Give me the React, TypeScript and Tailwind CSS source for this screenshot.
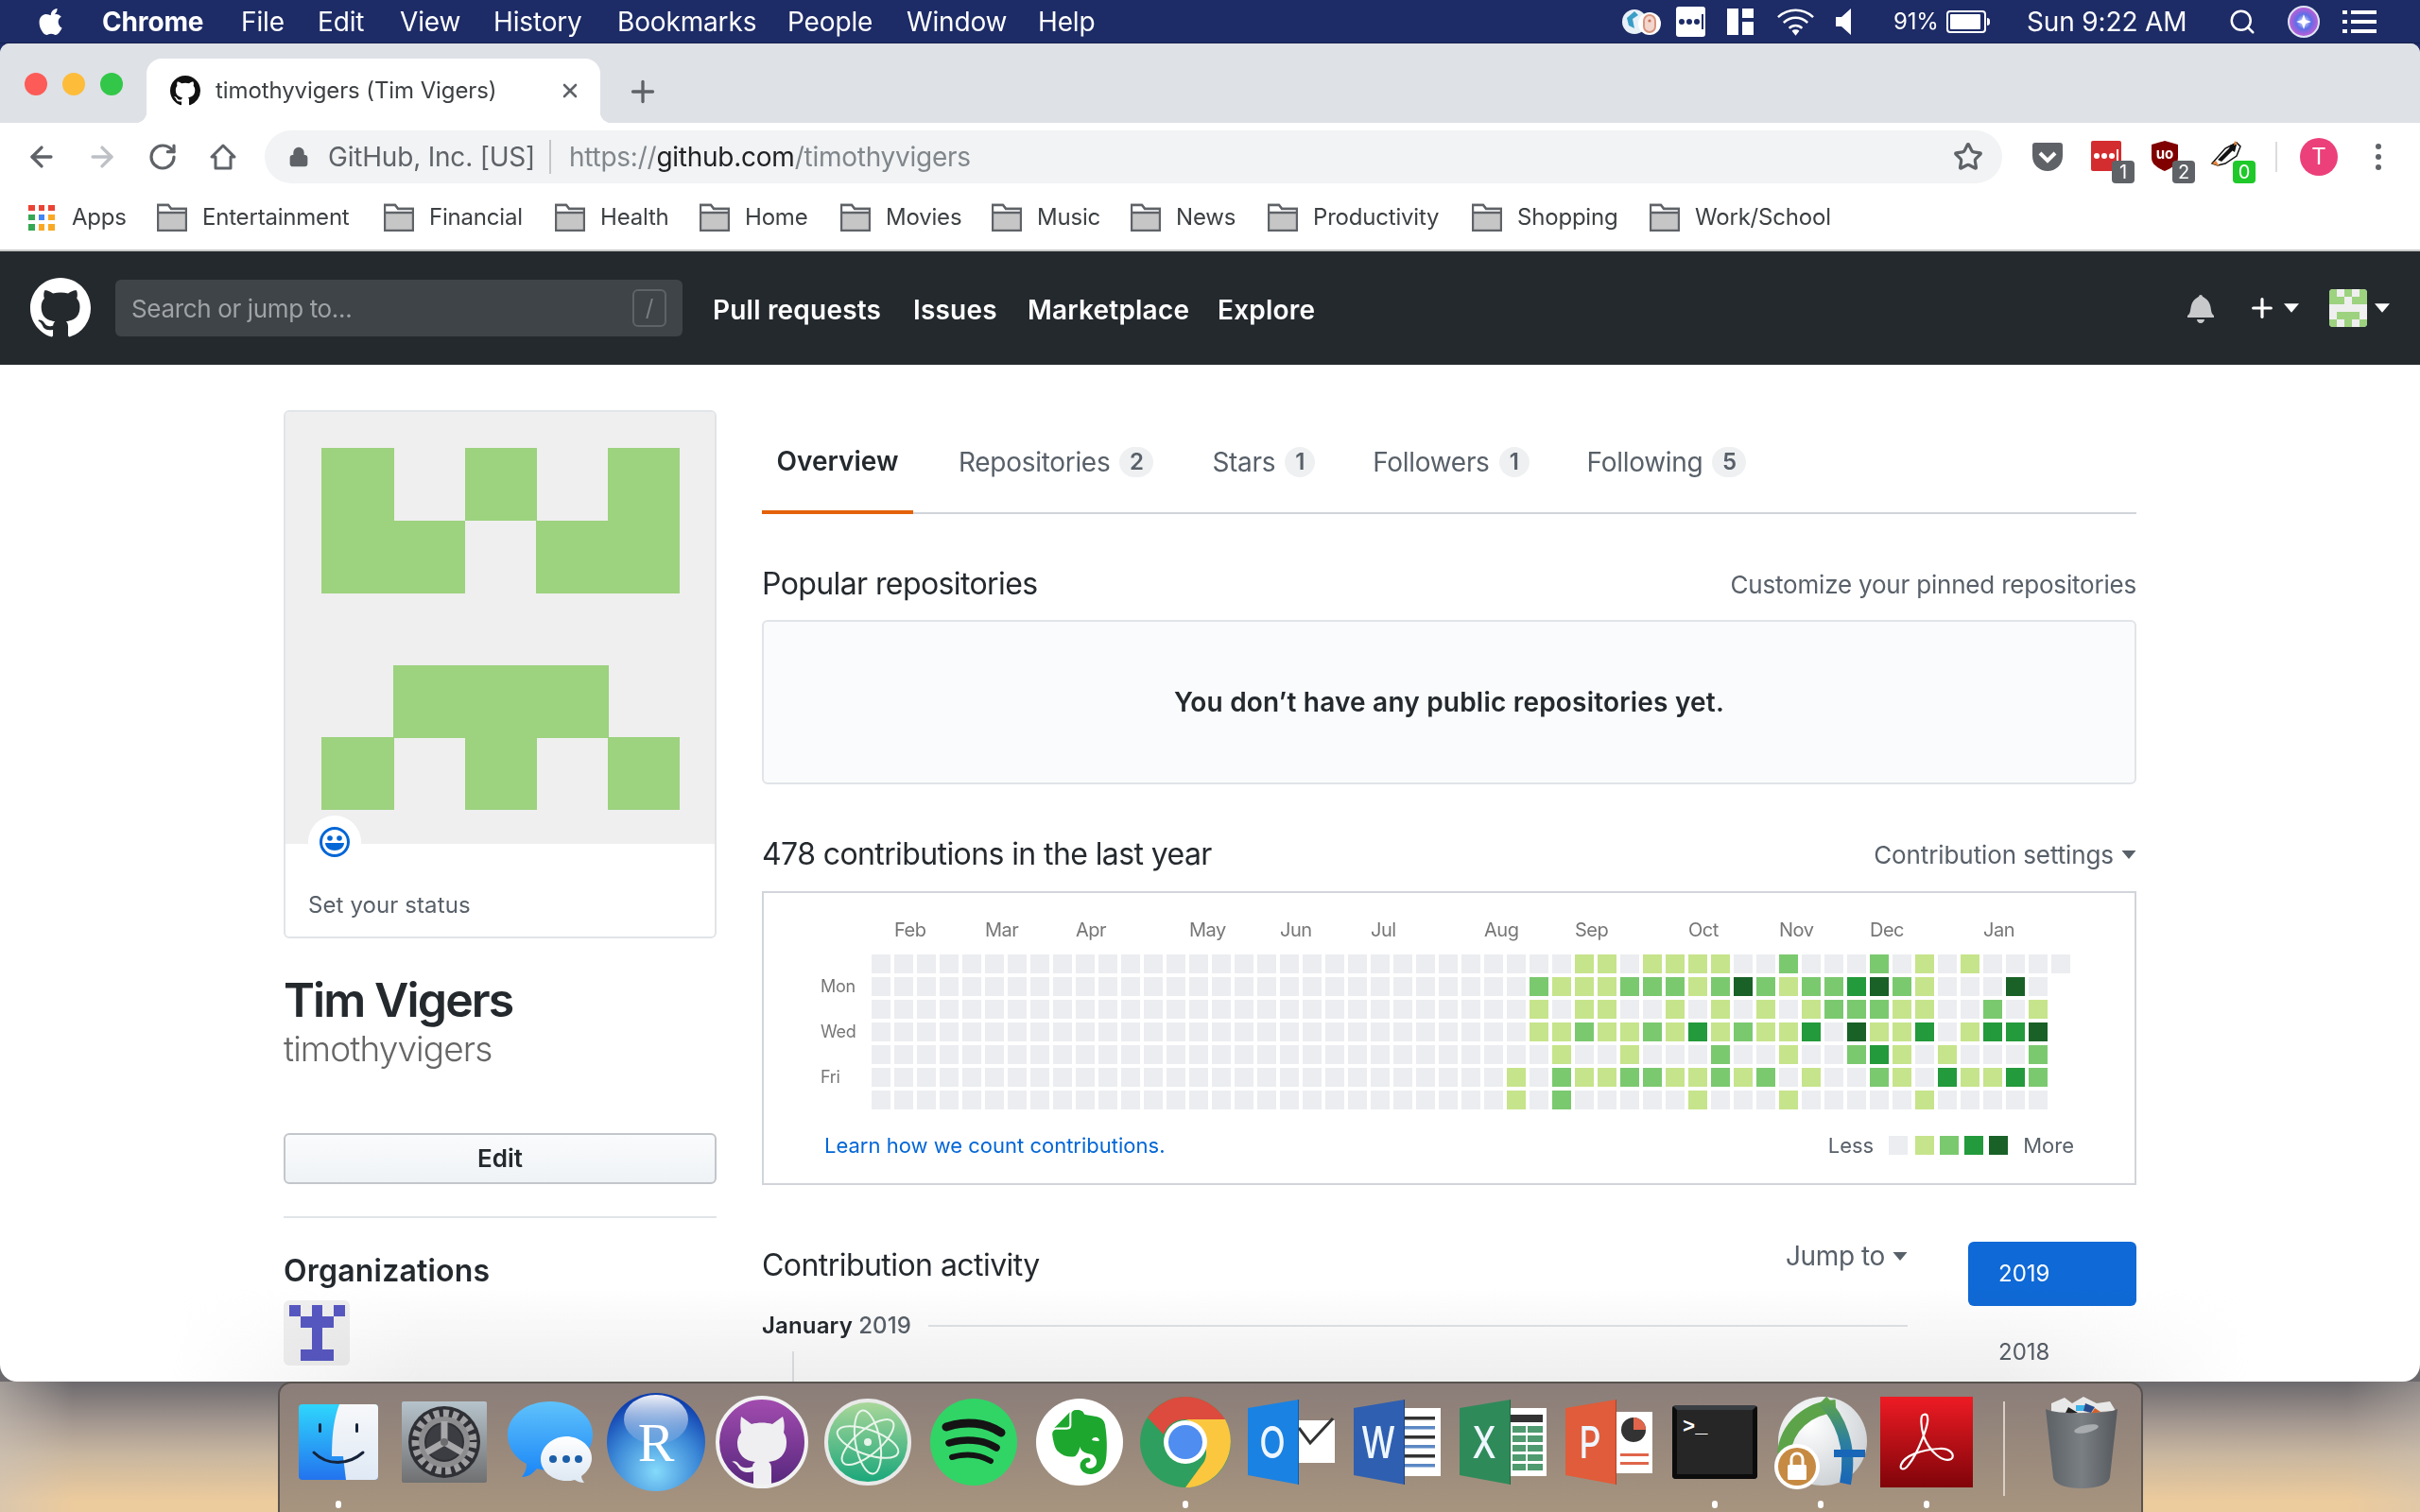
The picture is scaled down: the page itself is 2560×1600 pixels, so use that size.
import React from "react";
import { ArrowLeft, ArrowRight, RotateCw, Star, Lock, Plus, X, Search } from "lucide-react";
import { SiEvernote } from "react-icons/si";

const MARK =
  "M8 0C3.58 0 0 3.58 0 8c0 3.54 2.29 6.53 5.47 7.59.4.07.55-.17.55-.38 0-.19-.01-.82-.01-1.49-2.01.37-2.53-.49-2.69-.94-.09-.23-.48-.94-.82-1.13-.28-.15-.68-.52-.01-.53.63-.01 1.08.58 1.23.82.72 1.21 1.87.87 2.33.66.07-.52.28-.87.51-1.07-1.78-.2-3.64-.89-3.64-3.95 0-.87.31-1.59.82-2.15-.08-.2-.36-1.02.08-2.12 0 0 .67-.21 2.2.82.64-.18 1.32-.27 2-.27.68 0 1.36.09 2 .27 1.53-1.04 2.2-.82 2.2-.82.44 1.1.16 1.92.08 2.12.51.56.82 1.27.82 2.15 0 3.07-1.87 3.75-3.65 3.95.29.25.54.73.54 1.48 0 1.07-.01 1.93-.01 2.2 0 .21.15.46.55.38A8.013 8.013 0 0016 8c0-4.42-3.58-8-8-8z";

function Mark({ className }: { className: string }) {
  return (
    <svg viewBox="0 0 16 16" className={className} fill="currentColor">
      <path d={MARK} />
    </svg>
  );
}

function Caret({ className }: { className: string }) {
  return (
    <svg viewBox="0 0 10 6" className={className} fill="currentColor">
      <path d="M0 0h10L5 6z" />
    </svg>
  );
}

function Folder() {
  return (
    <svg viewBox="0 0 32 30" className="h-[30px] w-[32px] shrink-0">
      <path d="M1 29V2h11l3 4h16v23z" fill="#c6c6c6" stroke="#5f6368" strokeWidth="2.4" />
      <path d="M1 10h30V6H15l-3-4H1z" fill="#fff" stroke="#5f6368" strokeWidth="2.4" />
    </svg>
  );
}

const menuItems: [string, string][] = [
  ["File", "w-[81px]"],
  ["Edit", "w-[87px]"],
  ["View", "w-[99px]"],
  ["History", "w-[131px]"],
  ["Bookmarks", "w-[180px]"],
  ["People", "w-[126px]"],
  ["Window", "w-[139px]"],
  ["Help", "w-[80px]"],
];

function MenuBar() {
  return (
    <div className="flex h-[46px] shrink-0 items-center border-b border-[#14204f] bg-[#1d2b66] text-[28px] leading-none tracking-[-0.15px] text-white">
      <svg viewBox="-1 0 24 28" className="ml-[41px] mr-[41px] h-[32px] w-[26px]" fill="#fff">
        <path d="M17 1c.2 2-.6 3.8-1.7 5-1.200 1.300-2.900 2.200-4.500 2-.2-1.800.7-3.700 1.700-4.800C13.600 1.900 15.500 1 17 1zM21.700 20c-.6 1.300-.9 1.900-1.700 3.100-1.100 1.700-2.600 3.800-4.500 3.800-1.700 0-2.100-1.100-4.400-1.100-2.300 0-2.800 1.100-4.400 1.100-1.900 0-3.400-1.900-4.500-3.600C-.9 18.400-1.200 12.800.7 9.900 2 7.800 4.100 6.600 6.100 6.600c2 0 3.300 1.100 5 1.100 1.600 0 2.600-1.100 4.900-1.100 1.800 0 3.700 1 5 2.600-4.400 2.400-3.700 8.700.7 10.800z" />
      </svg>
      <span className="w-[147px] font-bold">Chrome</span>
      {menuItems.map(([t, w]) => (
        <span key={t} className={w}>
          {t}
        </span>
      ))}
      <div className="ml-auto flex items-center">
        <svg viewBox="0 0 44 32" className="mr-[14px] h-[32px] w-[44px]">
          <circle cx="14" cy="16" r="13" fill="#e8f1f8" />
          <path d="M6 12l8-7 4 4-6 4 2 10-6-3z" fill="#3a9ec7" />
          <circle cx="30" cy="18" r="12" fill="#fff" />
          <rect x="24" y="9" width="12" height="18" rx="6" fill="#f3d6cd" stroke="#d9957f" strokeWidth="2" />
          <circle cx="30" cy="15" r="1.600" fill="#c8705a" />
        </svg>
        <div className="mr-[23px] flex h-[32px] w-[31px] items-center justify-center gap-[2px] rounded-[3px] bg-white">
          <span className="h-[6px] w-[6px] rounded-full bg-[#1d2b66]" />
          <span className="h-[6px] w-[6px] rounded-full bg-[#1d2b66]" />
          <span className="h-[6px] w-[6px] rounded-full bg-[#1d2b66]" />
          <span className="h-[16px] w-[2px] bg-[#1d2b66]" />
        </div>
        <div className="mr-[24px] grid h-[28px] w-[28px] grid-cols-[12px_12px] grid-rows-[10px_14px] gap-[4px]">
          <span className="row-span-2 bg-white" />
          <span className="bg-white" />
          <span className="bg-white" />
        </div>
        <svg viewBox="0 0 42 30" className="mr-[22px] h-[30px] w-[41px]" fill="none" stroke="#fff" strokeWidth="2.600">
          <path d="M2 10C13 0 29 0 40 10" />
          <path d="M8 16c8-7 18-7 26 0" />
          <path d="M14 22c4-4 10-4 14 0" />
          <path d="M21 30l-4-5c2-2 6-2 8 0z" fill="#fff" stroke="none" />
        </svg>
        <svg viewBox="0 0 16 28" className="mr-[45px] h-[28px] w-[16px]" fill="#fff">
          <path d="M0 9h6l10-9v28L6 19H0z" />
        </svg>
        <span className="w-[56px] text-[24px]">91%</span>
        <div className="ml-[0px] mr-[39px] flex items-center">
          <div className="flex h-[24px] w-[42px] items-center rounded-[4px] border-2 border-white p-[2px]">
            <span className="h-full w-[32px] rounded-[1px] bg-white" />
          </div>
          <span className="ml-[1px] h-[8px] w-[3px] rounded-r-full bg-white" />
        </div>
        <span className="w-[167px] whitespace-nowrap">Sun 9:22 AM</span>
        <Search className="ml-[46px] text-white" size={30} strokeWidth={2} />
        <svg viewBox="0 0 34 34" className="ml-[33px] h-[34px] w-[34px]">
          <defs>
            <radialGradient id="siri" cx="50%" cy="50%" r="60%">
              <stop offset="0" stopColor="#e7eaff" />
              <stop offset="0.4" stopColor="#5b6ee8" />
              <stop offset="0.75" stopColor="#b45fd8" />
              <stop offset="1" stopColor="#3fb8e8" />
            </radialGradient>
          </defs>
          <circle cx="17" cy="17" r="16" fill="url(#siri)" stroke="#dfe5f5" strokeWidth="2" />
          <path d="M17 9l2 6 6 2-6 2-2 6-2-6-6-2 6-2z" fill="#fff" />
        </svg>
        <div className="ml-[24px] mr-[46px] flex w-[36px] flex-col gap-[6px]">
          {[0, 1, 2].map((i) => (
            <div key={i} className="flex h-[4px] gap-[4px]">
              <span className="w-[5px] bg-white" />
              <span className="flex-1 bg-white" />
            </div>
          ))}
        </div>
      </div>
    </div>
  );
}

function TabStrip() {
  return (
    <div className="flex h-[84px] shrink-0 items-end bg-[#dee1e6]">
      <div className="mb-[29px] flex w-[155px] gap-[16px] pl-[26px]">
        <span className="h-[24px] w-[24px] rounded-full bg-[#fc5b57]" />
        <span className="h-[24px] w-[24px] rounded-full bg-[#fdbc3a]" />
        <span className="h-[24px] w-[24px] rounded-full bg-[#32c748]" />
      </div>
      <div className="relative flex h-[68px] w-[480px] items-center rounded-t-[16px] bg-white pl-[25px] text-[24px] text-[#3c4043]">
        <span className="absolute -left-[12px] bottom-0 h-[12px] w-[12px] bg-[radial-gradient(circle_at_0_0,transparent_12px,#ffffff_12.500px)]" />
        <span className="absolute -right-[12px] bottom-0 h-[12px] w-[12px] bg-[radial-gradient(circle_at_100%_0,transparent_12px,#ffffff_12.500px)]" />
        <Mark className="h-[32px] w-[32px] shrink-0 text-[#111]" />
        <span className="ml-[16px] whitespace-nowrap tracking-[-0.1px]">timothyvigers (Tim Vigers)</span>
        <X className="absolute right-[20px] text-[#5f6368]" size={24} strokeWidth={2.6} />
      </div>
      <Plus className="mb-[15px] ml-[27px] text-[#5f6368]" size={36} strokeWidth={2.2} />
    </div>
  );
}

function Ext({ badge, badgeClass, children }: { badge?: string; badgeClass?: string; children: React.ReactNode }) {
  return (
    <div className="relative flex h-[64px] w-[64px] items-center justify-center">
      {children}
      {badge && (
        <span
          className={`absolute left-[36px] top-[36px] flex h-[24px] w-[24px] items-center justify-center rounded-[4px] text-[20px] leading-none text-white ${badgeClass}`}
        >
          {badge}
        </span>
      )}
    </div>
  );
}

function Toolbar() {
  return (
    <div className="flex h-[72px] shrink-0 items-center bg-white pl-[12px]">
      <div className="flex h-[64px] w-[64px] items-center justify-center">
        <ArrowLeft className="text-[#5f6368]" size={34} strokeWidth={2.4} />
      </div>
      <div className="flex h-[64px] w-[64px] items-center justify-center">
        <ArrowRight className="text-[#bdc1c6]" size={34} strokeWidth={2.4} />
      </div>
      <div className="flex h-[64px] w-[64px] items-center justify-center">
        <RotateCw className="text-[#5f6368]" size={32} strokeWidth={2.4} />
      </div>
      <div className="flex h-[64px] w-[64px] items-center justify-center">
        <svg viewBox="0 0 28 30" className="h-[30px] w-[28px]" fill="none" stroke="#5f6368" strokeWidth="3">
          <path d="M14 3L2 15h4v12h16V15h4z" strokeLinejoin="round" />
        </svg>
      </div>
      <div className="ml-[12px] flex h-[56px] w-[1838px] items-center rounded-full bg-[#f1f3f4] pl-[25px] text-[28px] leading-none text-[#5f6368]">
        <Lock className="text-[#5f6368]" fill="#5f6368" size={22} strokeWidth={2.4} />
        <span className="ml-[20px] w-[218px] whitespace-nowrap tracking-[-0.2px]">GitHub, Inc. [US]</span>
        <span className="ml-[16px] h-[36px] w-[2px] bg-[#c4c7c9]" />
        <span className="ml-[19px] whitespace-nowrap tracking-[-0.25px] text-[#80868b]">
          https://<span className="text-[#202124]">github.com</span>/timothyvigers
        </span>
        <Star className="ml-auto mr-[20px] text-[#5f6368]" size={32} strokeWidth={2.4} />
      </div>
      <div className="ml-[16px] flex items-center">
        <Ext>
          <svg viewBox="0 0 32 30" className="h-[30px] w-[32px]">
            <path d="M0 3q0-3 3-3h26q3 0 3 3v11c0 10-8 16-16 16S0 24 0 14z" fill="#5f6368" />
            <path d="M8 11l8 8 8-8" fill="none" stroke="#fff" strokeWidth="4" />
          </svg>
        </Ext>
        <Ext badge="1" badgeClass="bg-[#5f6368]">
          <div className="-ml-[4px] -mt-[2px] flex h-[32px] w-[32px] items-center justify-center gap-[2px] rounded-[2px] bg-[#d32d2f]">
            <span className="h-[6px] w-[6px] rounded-full bg-white" />
            <span className="h-[6px] w-[6px] rounded-full bg-white" />
            <span className="h-[6px] w-[6px] rounded-full bg-white" />
            <span className="h-[14px] w-[2px] bg-white" />
          </div>
        </Ext>
        <Ext badge="2" badgeClass="bg-[#5f6368]">
          <svg viewBox="0 0 28 32" className="-ml-[8px] -mt-[2px] h-[32px] w-[28px]">
            <path d="M14 0l14 4v14c0 7-7 11-14 14C7 29 0 25 0 18V4z" fill="#800000" />
            <text x="14" y="19" textAnchor="middle" fontFamily="Inter" fontSize="15" fontWeight="700" fill="#fff">
              uo
            </text>
          </svg>
        </Ext>
        <Ext badge="0" badgeClass="bg-[#1fc92a]">
          <svg viewBox="0 0 34 28" className="-ml-[6px] -mt-[6px] h-[28px] w-[34px]">
            <path d="M2 24L16 8l12-6 4 4-4 10-12 8-8 2z" fill="#fff" stroke="#111" strokeWidth="1.500" />
            <path d="M8 20L20 8l4 2-12 12zM22 4l6 0-2 8-6-4z" fill="#111" />
            <path d="M26 0l3 3-4 2zM2 24l8 3-4-6z" fill="#e8843a" />
          </svg>
        </Ext>
      </div>
      <span className="ml-[17px] h-[32px] w-[2px] bg-[#dadce0]" />
      <span className="ml-[24px] flex h-[40px] w-[40px] items-center justify-center rounded-full bg-[#ec407a] text-[24px] text-white">
        T
      </span>
      <div className="ml-[40px] flex flex-col gap-[5px]">
        <span className="h-[6px] w-[6px] rounded-full bg-[#5f6368]" />
        <span className="h-[6px] w-[6px] rounded-full bg-[#5f6368]" />
        <span className="h-[6px] w-[6px] rounded-full bg-[#5f6368]" />
      </div>
    </div>
  );
}

const bookmarks: [string, string][] = [
  ["Entertainment", "w-[240px]"],
  ["Financial", "w-[181px]"],
  ["Health", "w-[153px]"],
  ["Home", "w-[149px]"],
  ["Movies", "w-[160px]"],
  ["Music", "w-[147px]"],
  ["News", "w-[145px]"],
  ["Productivity", "w-[216px]"],
  ["Shopping", "w-[188px]"],
  ["Work/School", "w-[200px]"],
];

function BookmarksBar() {
  return (
    <div className="flex h-[64px] shrink-0 items-center border-b-2 border-[#c8c8c8] bg-white pb-[6px] pl-[30px] text-[24px] leading-none tracking-[-0.2px] text-[#3c4043]">
      <div className="grid h-[27px] w-[28px] grid-cols-3 grid-rows-3 gap-[4px]">
        {["#ea4335", "#ea4335", "#ea4335", "#34a853", "#4285f4", "#f9a825", "#34a853", "#f9a825", "#f9a825"].map((c, i) => (
          <span key={i} style={{ background: c }} />
        ))}
      </div>
      <span className="ml-[18px] w-[90px]">Apps</span>
      {bookmarks.map(([t, w]) => (
        <div key={t} className={`flex items-center gap-[16px] ${w}`}>
          <Folder />
          <span className="whitespace-nowrap">{t}</span>
        </div>
      ))}
    </div>
  );
}

function GitHubHeader() {
  return (
    <div className="flex h-[120px] shrink-0 items-center bg-[#24292e] pl-[32px] text-white">
      <Mark className="h-[64px] w-[64px] text-white" />
      <div className="ml-[26px] flex h-[60px] w-[600px] items-center justify-between rounded-[6px] bg-[#3f4448] pl-[17px] pr-[17px] text-[26px] text-[#9fa3a6]">
        <span className="tracking-[-0.35px]">Search or jump to...</span>
        <span className="flex h-[40px] w-[36px] items-center justify-center rounded-[6px] border-2 border-[#5e6367] text-[24px] text-[#7b7f83]">
          /
        </span>
      </div>
      <div className="ml-[32px] flex pt-[3px] text-[28px] font-semibold leading-none tracking-[0.2px]">
        <span className="w-[212px]">Pull requests</span>
        <span className="w-[121px]">Issues</span>
        <span className="w-[201px]">Marketplace</span>
        <span>Explore</span>
      </div>
      <div className="ml-auto flex items-center">
        <svg viewBox="0 0 14 16" className="h-[32px] w-[28px]" fill="#c8c9cb">
          <path d="M14 12v1H0v-1l.73-.58c.77-.77.81-2.55 1.19-4.42C2.690 3.230 6 2 6 2c0-.55.45-1 1-1s1 .45 1 1c0 0 3.390 1.230 4.160 5 .38 1.880.42 3.660 1.190 4.420l.66.58H14zm-7 4c1.110 0 2-.89 2-2H5c0 1.110.89 2 2 2z" />
        </svg>
        <Plus className="ml-[35px] text-white" size={32} strokeWidth={2.4} />
        <Caret className="ml-[7px] h-[10px] w-[16px] text-white" />
        <svg viewBox="0 0 5 5" className="ml-[32px] h-[40px] w-[40px] rounded-[4px] bg-[#efefef]" shapeRendering="crispEdges">
          <Identicon />
        </svg>
        <Caret className="ml-[8px] mr-[32px] h-[10px] w-[16px] text-white" />
      </div>
    </div>
  );
}

function Identicon() {
  const on = [
    [0, 0], [2, 0], [4, 0],
    [0, 1], [1, 1], [3, 1], [4, 1],
    [1, 3], [2, 3], [3, 3],
    [0, 4], [2, 4], [4, 4],
  ];
  return (
    <g fill="#9dd27f">
      {on.map(([x, y]) => (
        <rect key={`${x}-${y}`} x={x} y={y} width="1.010" height="1.010" />
      ))}
    </g>
  );
}

function Sidebar() {
  return (
    <div className="w-[458px] shrink-0">
      <div className="relative overflow-hidden rounded-[6px] border-2 border-[#e1e4e8]">
        <div className="bg-[#efefef] pb-[36px] pl-[38px] pt-[38px]">
          <svg viewBox="0 0 5 5" preserveAspectRatio="none" className="block h-[383px] w-[379px]" shapeRendering="crispEdges">
            <Identicon />
          </svg>
        </div>
        <div className="absolute left-[24px] top-[427px] flex h-[56px] w-[56px] items-center justify-center rounded-full bg-white">
          <svg viewBox="0 0 32 32" className="h-[32px] w-[32px]">
            <circle cx="16" cy="16" r="14.500" fill="none" stroke="#0366d6" strokeWidth="3" />
            <circle cx="11" cy="12" r="2.800" fill="#0366d6" />
            <circle cx="21" cy="12" r="2.800" fill="#0366d6" />
            <path d="M6 17h20c0 5-5 8-10 8S6 22 6 17z" fill="#0366d6" />
          </svg>
        </div>
        <div className="h-[98px] pl-[24px] pt-[49px] text-[24px] leading-[32px] tracking-[0.1px] text-[#586069]">Set your status</div>
      </div>
      <h1 className="mt-[35px] h-[60px] text-[50px] font-semibold leading-[60px] tracking-[-1.900px] text-[#24292e]">Tim Vigers</h1>
      <div className="-mt-[2px] h-[48px] text-[37px] font-light leading-[48px] tracking-[-0.900px] text-[#666666]">timothyvigers</div>
      <div className="mt-[65px] flex h-[54px] items-center justify-center rounded-[6px] border-2 border-[#c3c6ca] bg-[linear-gradient(180deg,#fafbfc,#eff3f6)] text-[26px] font-semibold leading-none text-[#24292e]">
        Edit
      </div>
      <div className="mt-[34px] h-[2px] bg-[#e1e4e8]" />
      <h2 className="mt-[36px] h-[40px] text-[32px] font-semibold leading-[40px] tracking-[0.2px] text-[#24292e]">Organizations</h2>
      <div className="mt-[11px] flex h-[69px] w-[70px] items-center justify-center rounded-[6px] bg-[#efefef]">
        <svg viewBox="0 0 5 5" className="h-[59px] w-[59px]" fill="#5757c2" shapeRendering="crispEdges">
          <rect x="0" y="0" width="1" height="1" />
          <rect x="2" y="0" width="1" height="1" />
          <rect x="4" y="0" width="1" height="1" />
          <rect x="1" y="1" width="3" height="1" />
          <rect x="2" y="2" width="1" height="2" />
          <rect x="1" y="4" width="3" height="1" />
        </svg>
      </div>
    </div>
  );
}

function Counter({ n }: { n: number }) {
  return (
    <span
      className={`ml-[10px] flex h-[32px] items-center justify-center rounded-full bg-[#eef0f1] text-[24px] font-semibold leading-none text-[#586069] ${
        n === 1 ? "w-[32px]" : "w-[36px]"
      }`}
    >
      {n}
    </span>
  );
}

function ProfileTabs() {
  return (
    <div className="flex h-[110px] items-start border-b-2 border-[#d1d5da] text-[28px] leading-none tracking-[-0.3px] text-[#586069]">
      <div className="flex h-[110px] w-[160px] items-center justify-center border-b-4 border-[#e36209] pt-[2px] font-semibold tracking-normal text-[#24292e]">Overview</div>
      <div className="ml-[48px] flex h-[108px] items-center pt-[2px]">
        Repositories
        <Counter n={2} />
      </div>
      <div className="ml-[62px] flex h-[108px] items-center pt-[2px]">
        Stars
        <Counter n={1} />
      </div>
      <div className="ml-[61px] flex h-[108px] items-center pt-[2px]">
        Followers
        <Counter n={1} />
      </div>
      <div className="ml-[61px] flex h-[108px] items-center pt-[2px]">
        Following
        <Counter n={5} />
      </div>
    </div>
  );
}

const LEVEL = ["bg-[#ebedf0]", "bg-[#c6e48b]", "bg-[#7bc96f]", "bg-[#239a3b]", "bg-[#196127]"];

const activity: Record<number, number>[] = [
  { 31: 1, 32: 1, 34: 1, 35: 1, 36: 1, 37: 1, 40: 2, 44: 2, 46: 1, 48: 1 },
  { 29: 2, 30: 1, 31: 1, 32: 1, 33: 2, 34: 2, 35: 2, 36: 1, 37: 2, 38: 4, 39: 2, 40: 1, 41: 2, 42: 2, 43: 3, 44: 4, 45: 2, 46: 1, 50: 4 },
  { 29: 1, 31: 1, 32: 1, 35: 1, 37: 1, 39: 1, 41: 1, 42: 2, 43: 2, 44: 2, 45: 1, 46: 1, 49: 2, 51: 1 },
  { 29: 1, 30: 1, 31: 2, 32: 1, 33: 1, 34: 2, 35: 1, 36: 3, 37: 1, 38: 2, 39: 1, 40: 1, 41: 3, 43: 4, 44: 1, 45: 1, 46: 3, 48: 1, 49: 3, 50: 3, 51: 4 },
  { 30: 1, 33: 1, 37: 2, 40: 1, 43: 2, 44: 3, 45: 1, 47: 1, 51: 2 },
  { 28: 1, 30: 2, 31: 1, 32: 1, 33: 2, 34: 2, 35: 1, 36: 1, 37: 2, 38: 1, 39: 2, 41: 1, 44: 2, 45: 1, 47: 3, 48: 1, 49: 1, 50: 3, 51: 2 },
  { 28: 1, 30: 2, 36: 1, 40: 1, 46: 1 },
];

const months: [string, number][] = [
  ["Feb", 1], ["Mar", 5], ["Apr", 9], ["May", 14], ["Jun", 18], ["Jul", 22],
  ["Aug", 27], ["Sep", 31], ["Oct", 36], ["Nov", 40], ["Dec", 44], ["Jan", 49],
];

function Graph() {
  return (
    <div className="mt-[19px] h-[311px] border-2 border-[#d1d5da] pt-[24px]">
      <div className="ml-[114px] grid h-[30px] grid-cols-[repeat(53,20px)] gap-x-[4px] text-[20px] leading-[30px] tracking-[-0.5px] text-[#767676]">
        {months.map(([m, c]) => (
          <span key={m} className="whitespace-nowrap" style={{ gridColumnStart: c + 1 }}>
            {m}
          </span>
        ))}
      </div>
      <div className="mt-[11px] flex">
        <div className="ml-[60px] grid w-[54px] grid-rows-[repeat(7,20px)] gap-y-[4px] text-[18px] leading-[20px] tracking-[-0.3px] text-[#767676]">
          <span className="row-start-2">Mon</span>
          <span className="row-start-4">Wed</span>
          <span className="row-start-6">Fri</span>
        </div>
        <div className="grid grid-cols-[repeat(53,20px)] grid-rows-[repeat(7,20px)] gap-[4px]">
          {activity.map((row, r) =>
            Array.from({ length: 53 }).map((_, c) =>
              c === 52 && r > 0 ? <span key={`${r}-${c}`} /> : <span key={`${r}-${c}`} className={LEVEL[row[c] ?? 0]} />
            )
          )}
        </div>
      </div>
      <div className="mt-[22px] flex h-[32px] items-center pl-[64px] pr-[64px] text-[22px] leading-none">
        <span className="text-[#0366d6]">Learn how we count contributions.</span>
        <span className="ml-auto text-[#586069]">Less</span>
        <span className="ml-[16px] h-[20px] w-[20px] bg-[#ebedf0]" />
        <span className="ml-[8px] h-[20px] w-[20px] bg-[#c6e48b]" />
        <span className="ml-[6px] h-[20px] w-[20px] bg-[#7bc96f]" />
        <span className="ml-[6px] h-[20px] w-[20px] bg-[#239a3b]" />
        <span className="ml-[6px] h-[20px] w-[20px] bg-[#196127]" />
        <span className="ml-[16px] text-[#586069]">More</span>
      </div>
    </div>
  );
}

function MainColumn() {
  return (
    <div className="ml-[48px] w-[1454px] shrink-0">
      <ProfileTabs />
      <div className="mt-[54px] flex h-[40px] items-center justify-between">
        <h2 className="text-[32px] leading-none tracking-[-0.6px] text-[#24292e]">Popular repositories</h2>
        <span className="pt-[1px] text-[26px] leading-none tracking-[-0.2px] text-[#586069]">Customize your pinned repositories</span>
      </div>
      <div className="mt-[18px] flex h-[174px] items-center justify-center rounded-[6px] border-2 border-[#e1e4e8] bg-[#fafbfc] text-[28px] font-semibold leading-none tracking-[0.2px] text-[#24292e]">
        You don’t have any public repositories yet.
      </div>
      <div className="mt-[54px] flex h-[40px] items-center justify-between">
        <h2 className="text-[32px] leading-none tracking-[-0.6px] text-[#24292e]">478 contributions in the last year</h2>
        <span className="flex items-center pt-[1px] text-[26px] leading-none tracking-[-0.1px] text-[#586069]">
          Contribution settings
          <Caret className="ml-[8px] h-[9px] w-[16px]" />
        </span>
      </div>
      <Graph />
      <div className="mt-[60px] flex">
        <div className="w-[1212px] pt-[5px]">
          <div className="flex items-start justify-between">
            <h2 className="h-[40px] text-[32px] leading-[40px] tracking-[-0.55px] text-[#24292e]">Contribution activity</h2>
            <span className="-mt-[10px] flex h-[40px] items-center text-[28px] leading-none tracking-[-0.4px] text-[#586069]">
              Jump to
              <Caret className="ml-[8px] h-[9px] w-[16px]" />
            </span>
          </div>
          <div className="mt-[24px] flex h-[40px] items-center text-[24px] leading-none tracking-[0.15px]">
            <span className="whitespace-nowrap font-semibold text-[#24292e]">
              January <span className="font-medium text-[#586069]">2019</span>
            </span>
            <span className="ml-[18px] h-[2px] flex-1 bg-[#e1e4e8]" />
          </div>
          <div className="ml-[32px] mt-[7px] h-[40px] w-[2px] bg-[#e1e4e8]" />
        </div>
        <div className="ml-[64px] w-[178px] text-[24px] leading-none">
          <div className="flex h-[68px] items-center rounded-[6px] bg-[#0f69d6] pl-[32px] text-white">2019</div>
          <div className="mt-[15px] flex h-[68px] items-center pl-[32px] text-[#586069]">2018</div>
        </div>
      </div>
    </div>
  );
}

function Ic({ w, h, vb, children }: { w: string; h: string; vb: string; children: React.ReactNode }) {
  return (
    <svg viewBox={vb} className={`${w} ${h}`}>
      {children}
    </svg>
  );
}

function OfficeIcon({ color, dark, letter, children, docY = 9, docH = 72 }: { color: string; dark: string; letter: string; children: React.ReactNode; docY?: number; docH?: number }) {
  return (
    <svg viewBox="0 0 92 90" className="h-[90px] w-[92px]">
      <rect x="52" y={docY} width="40" height={docH} fill="#fff" />
      {children}
      <path d="M0 9L54 0v90L0 80z" fill={color} />
      <path d="M53 0h1v90h-1z" fill={dark} />
      <text transform="translate(26 62) scale(0.78 1)" textAnchor="middle" fontFamily="Inter" fontSize="46" fontWeight="500" fill="#eef6ff">
        {letter}
      </text>
    </svg>
  );
}

const dockIcons: { key: string; dot?: boolean; el: React.ReactNode }[] = [
  {
    key: "finder",
    dot: true,
    el: (
      <Ic w="w-[84px]" h="h-[80px]" vb="0 0 84 80">
        <defs>
          <linearGradient id="fb" x1="0" y1="0" x2="0" y2="1">
            <stop offset="0" stopColor="#2fd6fd" />
            <stop offset="1" stopColor="#2373ee" />
          </linearGradient>
          <linearGradient id="fw" x1="0" y1="0" x2="0" y2="1">
            <stop offset="0" stopColor="#f7f8fa" />
            <stop offset="1" stopColor="#dfe9f5" />
          </linearGradient>
        </defs>
        <rect width="84" height="80" rx="4" fill="url(#fb)" />
        <path d="M43 0h37q4 0 4 4v72q0 4-4 4H50q-2-16-3-25h-12c0-20 2-40 8-55z" fill="url(#fw)" />
        <rect x="21" y="20" width="3" height="10" rx="1.500" fill="#15233a" />
        <rect x="60" y="20" width="3" height="10" rx="1.500" fill="#15233a" />
        <path d="M16 51c14 14 36 14 52 0" fill="none" stroke="#15233a" strokeWidth="3" strokeLinecap="round" />
      </Ic>
    ),
  },
  {
    key: "settings",
    el: (
      <Ic w="w-[90px]" h="h-[86px]" vb="0 0 90 86">
        <defs>
          <linearGradient id="sg" x1="0" y1="0" x2="0" y2="1">
            <stop offset="0" stopColor="#b6c3cb" />
            <stop offset="1" stopColor="#6f7071" />
          </linearGradient>
        </defs>
        <rect width="90" height="86" rx="2" fill="url(#sg)" />
        <circle cx="45" cy="43" r="38" fill="#2f3035" />
        <circle cx="45" cy="43" r="30" fill="none" stroke="#a0a0a2" strokeWidth="9" strokeDasharray="6 4" />
        <circle cx="45" cy="43" r="24" fill="none" stroke="#8c8c8e" strokeWidth="6" />
        <circle cx="45" cy="43" r="19" fill="#3c3d42" />
        <path d="M45 43V21M45 43L26 54M45 43l19 11" stroke="#a8a8aa" strokeWidth="7" />
        <circle cx="45" cy="43" r="4" fill="#6c6c6e" />
      </Ic>
    ),
  },
  {
    key: "messages",
    el: (
      <Ic w="w-[90px]" h="h-[86px]" vb="0 0 90 86">
        <defs>
          <linearGradient id="mg" x1="0" y1="0" x2="0" y2="1">
            <stop offset="0" stopColor="#5fc2fb" />
            <stop offset="1" stopColor="#1a86f7" />
          </linearGradient>
          <linearGradient id="mw" x1="0" y1="0" x2="0" y2="1">
            <stop offset="0" stopColor="#fff" />
            <stop offset="1" stopColor="#dde8f3" />
          </linearGradient>
        </defs>
        <path d="M45 0c25 0 45 15 45 35s-20 38-45 38c-5 0-10-1-14-2-4 5-9 9-16 9 3-4 5-8 5-14C8 60 0 49 0 35 0 15 20 0 45 0z" fill="url(#mg)" />
        <path d="M62 37c14 0 27 10 27 23 0 8-5 15-11 19 0 2 1 4 3 7-4 0-7-1-10-3-3 1-6 1-9 1-14 0-27-10-27-23s13-24 27-24z" fill="url(#mw)" />
        <circle cx="48" cy="61" r="4" fill="#1c5fa8" />
        <circle cx="62" cy="61" r="4" fill="#1c5fa8" />
        <circle cx="75" cy="61" r="4" fill="#1c5fa8" />
      </Ic>
    ),
  },
  {
    key: "r",
    el: (
      <Ic w="w-[104px]" h="h-[104px]" vb="0 0 104 104">
        <defs>
          <radialGradient id="rg" cx="50%" cy="80%" r="75%">
            <stop offset="0" stopColor="#84dafb" />
            <stop offset="0.6" stopColor="#3a86d6" />
            <stop offset="1" stopColor="#0f3fae" />
          </radialGradient>
          <linearGradient id="rh" x1="0" y1="0" x2="0" y2="1">
            <stop offset="0" stopColor="#f2f3f8" />
            <stop offset="1" stopColor="#7ba4dd" stopOpacity="0.4" />
          </linearGradient>
        </defs>
        <circle cx="52" cy="52" r="52" fill="url(#rg)" />
        <ellipse cx="52" cy="28" rx="34" ry="26" fill="url(#rh)" />
        <text x="52" y="72" textAnchor="middle" fontFamily="Liberation Serif" fontSize="58" fill="#fff">
          R
        </text>
      </Ic>
    ),
  },
  {
    key: "ghdesktop",
    el: (
      <Ic w="w-[98px]" h="h-[98px]" vb="0 0 98 98">
        <defs>
          <linearGradient id="gp" x1="0" y1="0" x2="0" y2="1">
            <stop offset="0" stopColor="#a34db0" />
            <stop offset="1" stopColor="#56277c" />
          </linearGradient>
        </defs>
        <circle cx="49" cy="49" r="47" fill="url(#gp)" stroke="#f2f2f2" strokeWidth="4" />
        <path d="M27 22l11 8c7-2 15-2 22 0l11-8c2 6 2 12 1 17 3 4 3 8 3 11 0 12-8 19-19 20 3 2 3 5 3 9v15H40V80c-5 2-13 2-17-6-2-2-4-4-6-4 3-2 6 0 8 3 3 4 9 4 14 2 0-2 1-4 3-5-11-1-19-8-19-20 0-3 1-8 4-11-1-5-1-11 0-17z" fill="#efeff1" />
      </Ic>
    ),
  },
  {
    key: "atom",
    el: (
      <Ic w="w-[92px]" h="h-[92px]" vb="0 0 92 92">
        <defs>
          <linearGradient id="ag" x1="0" y1="0" x2="0" y2="1">
            <stop offset="0" stopColor="#add89a" />
            <stop offset="1" stopColor="#17a67a" />
          </linearGradient>
        </defs>
        <circle cx="46" cy="46" r="44" fill="url(#ag)" stroke="#e9e9e9" strokeWidth="4" />
        <g fill="none" stroke="#e8f5ea" strokeWidth="2">
          <ellipse cx="46" cy="46" rx="34" ry="13" transform="rotate(20 46 46)" />
          <ellipse cx="46" cy="46" rx="34" ry="13" transform="rotate(80 46 46)" />
          <ellipse cx="46" cy="46" rx="34" ry="13" transform="rotate(140 46 46)" />
        </g>
        <circle cx="46" cy="46" r="4" fill="#e8f5ea" />
      </Ic>
    ),
  },
  {
    key: "spotify",
    el: (
      <Ic w="w-[92px]" h="h-[92px]" vb="0 0 92 92">
        <circle cx="46" cy="46" r="46" fill="#30d566" />
        <g fill="none" stroke="#141414" strokeLinecap="round">
          <path d="M17 30c20-7 42-5 58 6" strokeWidth="9" />
          <path d="M20 47c16-5 36-4 50 5" strokeWidth="7.500" />
          <path d="M23 62c14-4 29-3 41 4" strokeWidth="6" />
        </g>
      </Ic>
    ),
  },
  {
    key: "evernote",
    el: (
      <div className="flex h-[92px] w-[92px] items-center justify-center rounded-full bg-white">
        <SiEvernote className="text-[#1ea72e]" size={68} />
      </div>
    ),
  },
  {
    key: "chrome",
    dot: true,
    el: (
      <Ic w="w-[96px]" h="h-[96px]" vb="0 0 96 96">
        <circle cx="48" cy="48" r="48" fill="#2e9f5e" />
        <path d="M48 0c18 0 33 10 42 24H48C37 24 29 30 25 40L8 22C17 9 31 0 48 0z" fill="#dc4b3e" />
        <path d="M90 24c8 15 8 33-1 48S65 96 48 96l19-26c3-4 5-14 0-22-2-6-7-21-19-24z" fill="#fbc73f" />
        <circle cx="48" cy="48" r="23" fill="#fff" />
        <circle cx="48" cy="48" r="18" fill="#4f8df0" />
      </Ic>
    ),
  },
  {
    key: "outlook",
    el: (
      <OfficeIcon color="#1a82e2" dark="#0c5fb4" letter="O" docY={22} docH={45}>
        <path d="M54 30l12 16 24-26" fill="none" stroke="#333" strokeWidth="3" />
      </OfficeIcon>
    ),
  },
  {
    key: "word",
    el: (
      <OfficeIcon color="#2f5fb0" dark="#1e4487" letter="W">
        {[18, 28, 38, 48, 58, 68].map((y, i) => (
          <rect key={y} x="54" y={y} width="32" height="3.500" fill={i % 2 ? "#5b88c4" : "#333"} />
        ))}
      </OfficeIcon>
    ),
  },
  {
    key: "excel",
    el: (
      <OfficeIcon color="#2f8a5a" dark="#1d6a41" letter="X">
        <rect x="54" y="16" width="34" height="8" fill="#333" />
        {[28, 38, 48, 58, 68].map((y) => (
          <g key={y}>
            <rect x="56" y={y} width="14" height="7" fill="#4f9a6f" />
            <rect x="72" y={y} width="16" height="7" fill="#4f9a6f" />
          </g>
        ))}
      </OfficeIcon>
    ),
  },
  {
    key: "ppt",
    el: (
      <OfficeIcon color="#e05c3a" dark="#b7402a" letter="P" docY={13} docH={65}>
        <circle cx="72" cy="32" r="13" fill="#333" />
        <path d="M72 19a13 13 0 0113 13H72z" fill="#e0654a" />
        <rect x="58" y="57" width="30" height="3" fill="#e0654a" />
        <rect x="58" y="66" width="30" height="3" fill="#e0654a" />
      </OfficeIcon>
    ),
  },
  {
    key: "terminal",
    dot: true,
    el: (
      <div className="flex h-[78px] w-[90px] items-start rounded-[4px] border-[5px] border-[#0c0c0c] border-t-[#3a3f44] bg-[#262626] pl-[6px] pt-[8px] font-['Liberation_Mono',monospace] text-[22px] font-bold leading-none text-white">
        &gt;_
      </div>
    ),
  },
  {
    key: "cisco",
    dot: true,
    el: (
      <Ic w="w-[100px]" h="h-[100px]" vb="0 0 100 100">
        <defs>
          <radialGradient id="cg" cx="35%" cy="30%" r="80%">
            <stop offset="0" stopColor="#fff" />
            <stop offset="1" stopColor="#c9ced2" />
          </radialGradient>
          <linearGradient id="cb" x1="0" y1="0" x2="0" y2="1">
            <stop offset="0" stopColor="#5da34a" />
            <stop offset="0.5" stopColor="#2c7fa0" />
            <stop offset="1" stopColor="#1866b8" />
          </linearGradient>
        </defs>
        <circle cx="52" cy="49" r="47" fill="url(#cg)" />
        <path d="M11 62C14 34 36 14 66 12" fill="none" stroke="#5da34a" strokeWidth="14" />
        <path d="M52 6c18 18 32 48 24 88" fill="none" stroke="url(#cb)" strokeWidth="12" />
        <path d="M64 62h33" fill="none" stroke="#1866b8" strokeWidth="8" />
        <circle cx="25" cy="76" r="24" fill="#fff" />
        <circle cx="25" cy="76" r="20" fill="#c68a42" />
        <rect x="15" y="74" width="20" height="16" rx="1.500" fill="#fff" />
        <path d="M19 74v-6a6 6 0 0112 0v6" fill="none" stroke="#fff" strokeWidth="3" />
      </Ic>
    ),
  },
  {
    key: "acrobat",
    dot: true,
    el: (
      <Ic w="w-[98px]" h="h-[96px]" vb="0 0 98 96">
        <defs>
          <linearGradient id="pg" x1="0" y1="0" x2="0" y2="1">
            <stop offset="0" stopColor="#ee1b24" />
            <stop offset="1" stopColor="#7f0409" />
          </linearGradient>
        </defs>
        <rect width="98" height="96" fill="url(#pg)" />
        <path d="M46 19C42 19 43 32 46 42C52 58 66 70 75 66C80 62 74 54 62 55C44 56 26 62 22 72C20 78 26 78 30 72C40 60 52 28 50 22C50 19 48 18 46 19z" fill="none" stroke="#fff" strokeWidth="2.200" />
      </Ic>
    ),
  },
];

function Dock() {
  return (
    <div className="relative flex flex-1 bg-[linear-gradient(90deg,rgba(205,195,185,0.55)_0%,rgba(205,195,185,0)_3%,rgba(205,195,185,0)_97%,rgba(205,195,185,0.35)_100%),linear-gradient(180deg,#6c696d_0%,#a2968f_30%,#c8b69f_55%,#eccb9d_90%)]">
      <div className="ml-[294px] flex h-[140px] w-[1973px] rounded-t-[14px] border-2 border-b-0 border-[#58534f] bg-[linear-gradient(180deg,#8a7d79_0%,#a8957f_100%)] pl-[6px] pt-[9px]">
        {dockIcons.map((d) => (
          <div key={d.key} className="flex w-[112px] shrink-0 flex-col items-center">
            <div className="flex h-[106px] items-center justify-center">{d.el}</div>
            {d.dot && <span className="mt-[9px] h-[8px] w-[6px] rounded-full bg-white" />}
          </div>
        ))}
        <span className="ml-[25px] mt-[10px] h-[100px] w-[2px] bg-[#d9cfc4]" />
        <div className="ml-[25px] flex w-[112px] shrink-0 flex-col items-center">
          <div className="flex h-[106px] items-center justify-center">
            <Ic w="w-[76px]" h="h-[98px]" vb="0 0 76 98">
              <defs>
                <linearGradient id="tg" x1="0" y1="0" x2="1" y2="0">
                  <stop offset="0" stopColor="#5c6166" />
                  <stop offset="0.5" stopColor="#7a7f84" />
                  <stop offset="1" stopColor="#55595e" />
                </linearGradient>
              </defs>
              <path d="M6 8l14-6 8 6 12-7 14 7 14-2 6 10-68 4z" fill="#e8e8e8" />
              <path d="M24 12l10 6-14 2z" fill="#222" />
              <path d="M32 10h10v6H32z" fill="#3fb4e8" />
              <path d="M42 8l10 4-4 6-8-2z" fill="#2a4a8a" />
              <path d="M52 13l6 4-10 2z" fill="#d2622a" />
              <path d="M0 14c10 6 66 6 76 0l-8 72c-1 8-14 12-30 12S9 94 8 86z" fill="url(#tg)" />
              <ellipse cx="43" cy="35" rx="13" ry="4" fill="#a8acaf" transform="rotate(-12 43 35)" />
            </Ic>
          </div>
        </div>
      </div>
    </div>
  );
}

export default function App() {
  return (
    <div className="flex h-[1600px] w-[2560px] flex-col overflow-hidden bg-[linear-gradient(180deg,#1d2b66_0%,#1d2b66_50%,#6c696d_50%,#6c696d_100%)] font-['Inter','Liberation_Sans',sans-serif]">
      <MenuBar />
      <div className="relative flex h-[1416px] shrink-0 flex-col overflow-hidden rounded-b-[18px] rounded-t-[10px] bg-white">
        <TabStrip />
        <Toolbar />
        <BookmarksBar />
        <GitHubHeader />
        <div className="flex flex-1 pl-[300px] pt-[48px]">
          <Sidebar />
          <MainColumn />
        </div>
        <div className="absolute inset-x-[180px] bottom-0 h-[100px] bg-[linear-gradient(180deg,rgba(238,238,238,0)_0%,#eeeeee_100%)] mix-blend-multiply [mask-image:linear-gradient(90deg,transparent_0%,black_12%,black_88%,transparent_100%)]" />
      </div>
      <Dock />
    </div>
  );
}
